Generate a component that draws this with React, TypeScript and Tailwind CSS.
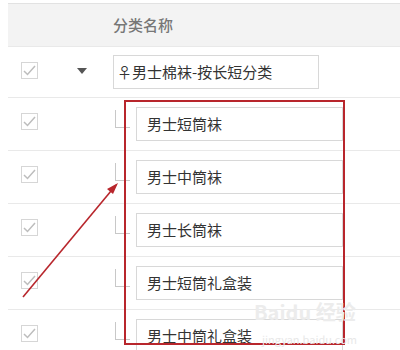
import React from "react";

const children = ["男士短筒袜", "男士中筒袜", "男士长筒袜", "男士短筒礼盒装", "男士中筒礼盒装"];

function Check() {
  return (
    <div className="ml-[13px] mt-[15px] flex h-[17px] w-[17px] shrink-0 items-center justify-center border border-[#d6d6d6] bg-white">
      <svg width="13" height="11" viewBox="0 0 13 11">
        <path d="M1 6 L4.5 9.5 L12 1" fill="none" stroke="#bdbdbd" strokeWidth="1.5" />
      </svg>
    </div>
  );
}

export default function App() {
  return (
    <div
      className="relative h-[350px] w-[400px] overflow-hidden bg-white pt-[3px] text-[#333]"
      style={{ fontFamily: '"Noto Sans CJK SC", "Noto Sans", sans-serif' }}
    >
      {/* header */}
      <div className="ml-2 flex h-[43px] items-center border-t border-[#e2e2e2] bg-[#f3f3f3] pl-[105px] text-[15px] font-medium text-[#777]">
        分类名称
      </div>

      {/* parent row */}
      <div className="ml-2 flex h-[51px] border-t border-[#e9e9e9]">
        <Check />
        <div className="ml-[39px] mt-[21px] h-0 w-0 border-x-[5px] border-t-[6px] border-x-transparent border-t-[#555]" />
        <div className="ml-[26px] mt-[8px] flex h-[34px] w-[206px] items-center border border-[#d8d8d8] pl-[3px] text-[15px]">
          ♀男士棉袜-按长短分类
        </div>
      </div>

      {/* child rows */}
      {children.map((name) => (
        <div key={name} className="ml-2 flex h-[53px] border-t border-[#e9e9e9]">
          <Check />
          <div className="ml-[77px] mt-[12px] h-[18px] w-[15px] shrink-0 border-b border-l border-[#c8c8c8]" />
          <div className="ml-[6px] mt-[9px] flex h-[34px] w-[207px] shrink-0 items-center border border-[#d8d8d8] pl-[10px] text-[15px]">
            {name}
          </div>
        </div>
      ))}

      {/* red highlight box */}
      <div className="absolute left-[124px] top-[100px] h-[245px] w-[221px] border-2 border-[#b8262c]" />

      {/* red arrow */}
      <svg className="absolute left-0 top-0" width="400" height="350" viewBox="0 0 400 350">
        <line x1="23" y1="297" x2="116" y2="185" stroke="#b8262c" strokeWidth="1.6" />
        <polygon points="118,183 107,189 113,194" fill="#b8262c" />
      </svg>

      {/* watermark */}
      <div className="absolute left-[254px] top-[302px] text-[20px] font-bold leading-[20px] text-[#ececec]">
        Baidu 经验
      </div>
      <div className="absolute left-[262px] top-[334px] text-[11px] leading-[11px] text-[#e8e8e8]">
        jingyan.baidu.com
      </div>
    </div>
  );
}
